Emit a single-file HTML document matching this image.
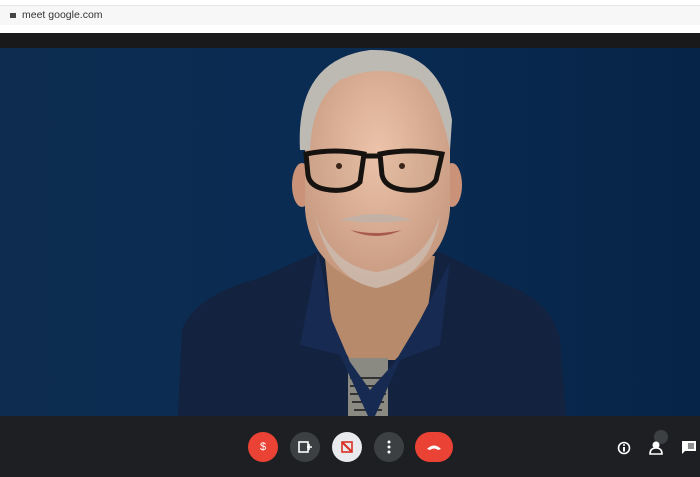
<!DOCTYPE html>
<html><head><style>
html,body{margin:0;padding:0;width:700px;height:477px;overflow:hidden;background:#1f2023;font-family:"Liberation Sans",sans-serif}
.top{position:absolute;left:0;top:0;width:700px;height:33px;background:#fff}
.addr{position:absolute;left:0;top:5px;width:700px;height:19px;background:#f7f7f8;border-top:1px solid #e4e4e4}
.addr span{position:absolute;left:22px;top:3px;font-size:10.5px;color:#333}
.lock{position:absolute;left:10px;top:7px;width:6px;height:5px;background:#444}
.dark{position:absolute;left:0;top:33px;width:700px;height:15px;background:#19191b}
svg.v{position:absolute;left:0;top:48px}
.bar{position:absolute;left:0;top:416px;width:700px;height:61px;background:#1e1f22}
.b{position:absolute;top:432px;width:30px;height:30px;border-radius:15px;display:flex;align-items:center;justify-content:center;color:#fff;font-size:11px}
</style></head><body>
<div class="top"><div class="addr"><div class="lock"></div><span>meet google.com</span></div></div>
<div class="dark"></div>
<svg class="v" width="700" height="368" viewBox="0 48 700 368">
<defs><linearGradient id="bg" x1="0" x2="1"><stop offset="0" stop-color="#0d2c50"/><stop offset="0.5" stop-color="#0a2b52"/><stop offset="1" stop-color="#062447"/></linearGradient>
<radialGradient id="sk" cx="0.5" cy="0.4" r="0.6"><stop offset="0" stop-color="#ecc3aa"/><stop offset="1" stop-color="#c79a80"/></radialGradient></defs>
<rect x="0" y="48" width="700" height="368" fill="url(#bg)"/>
<path d="M178 416 L182 330 Q195 295 260 278 L318 252 L440 252 L500 282 Q552 300 560 340 L566 416 Z" fill="#13223f"/>
<path d="M325 258 L435 256 L425 330 L395 360 L350 360 L332 330 Z" fill="#b88a6c"/>
<rect x="348" y="358" width="40" height="58" fill="#8a8a82"/>
<g stroke="#333" stroke-width="2"><line x1="350" y1="378" x2="386" y2="378"/><line x1="350" y1="386" x2="386" y2="386"/><line x1="350" y1="394" x2="386" y2="394"/><line x1="352" y1="402" x2="384" y2="402"/><line x1="354" y1="410" x2="382" y2="410"/></g>
<path d="M318 252 L300 345 L340 355 L368 416 L375 416 L400 360 L440 345 L450 262 L420 320 L395 362 L370 390 L350 362 L332 320 Z" fill="#172a52"/>
<ellipse cx="302" cy="185" rx="10" ry="22" fill="#c99279"/>
<ellipse cx="452" cy="185" rx="10" ry="22" fill="#c99279"/>
<path d="M305 120 Q305 60 376 60 Q448 60 450 120 L450 210 Q445 270 376 288 Q310 270 305 210 Z" fill="url(#sk)"/>
<path d="M300 150 Q295 60 370 50 Q440 48 452 120 L450 150 Q440 100 420 80 Q380 62 340 80 Q312 100 310 150 Z" fill="#bdbab4"/>
<path d="M315 215 Q330 280 376 288 Q430 278 440 215 Q425 265 376 272 Q330 265 315 215 Z" fill="#cbbcb0" opacity="0.8"/>
<path d="M340 220 Q376 208 412 220 Q376 225 340 220Z" fill="#c2b1a4"/>
<path d="M350 230 Q376 242 402 230 Q376 236 350 230Z" fill="#a85a4c"/>
<g fill="rgba(200,170,140,0.2)" stroke="#15120f" stroke-width="5">
<path d="M306 154 Q335 148 364 154 L360 182 Q350 192 330 190 Q310 188 308 175 Z"/>
<path d="M380 154 Q410 148 442 154 L436 180 Q428 192 405 190 Q385 188 382 175 Z"/>
<line x1="364" y1="156" x2="380" y2="156"/></g>
<circle cx="339" cy="166" r="3" fill="#3a2418"/><circle cx="402" cy="166" r="3" fill="#3a2418"/>
</svg>
<div class="bar"></div>
<div class="b" style="left:248px;background:#ea4335">$</div>
<div class="b" style="left:290px;background:#3c4043"><svg width="14" height="12"><rect x="1" y="1" width="9" height="10" fill="none" stroke="#fff" stroke-width="1.6"/><path d="M9 6h5M11 3v6" stroke="#fff" stroke-width="1.6"/></svg></div>
<div class="b" style="left:332px;background:#e8eaed"><svg width="12" height="12"><rect x="1" y="1" width="10" height="10" fill="none" stroke="#d93025" stroke-width="1.6"/><path d="M1 1L11 11" stroke="#d93025" stroke-width="2"/></svg></div>
<div class="b" style="left:374px;background:#3c4043"><svg width="4" height="14"><circle cx="2" cy="2" r="1.5" fill="#fff"/><circle cx="2" cy="7" r="1.5" fill="#fff"/><circle cx="2" cy="12" r="1.5" fill="#fff"/></svg></div>
<div class="b" style="left:415px;width:38px;background:#ea4335"><svg width="16" height="8"><path d="M1 6 Q8 -1 15 6 L12 7 Q8 4 4 7 Z" fill="#fff"/></svg></div>
<svg style="position:absolute;left:617px;top:441px" width="14" height="14"><circle cx="7" cy="7" r="5.5" fill="none" stroke="#fff" stroke-width="1.6"/><rect x="6" y="6" width="2" height="4.5" fill="#fff"/><circle cx="7" cy="4" r="1" fill="#fff"/></svg>
<div style="position:absolute;left:654px;top:430px;width:14px;height:14px;border-radius:7px;background:#3c4043"></div>
<svg style="position:absolute;left:648px;top:440px" width="16" height="15"><circle cx="8" cy="5" r="3.5" fill="#fff"/><path d="M2 14 Q2 8 8 8 Q14 8 14 14Z" fill="none" stroke="#fff" stroke-width="1.6"/></svg>
<svg style="position:absolute;left:681px;top:440px" width="16" height="14"><rect x="1" y="1" width="14" height="10" fill="#fff"/><path d="M1 11l0 3 3-3z" fill="#fff"/><path d="M7 4h6M7 6h6M7 8h6" stroke="#1e1f22" stroke-width="1"/></svg>
</body></html>
